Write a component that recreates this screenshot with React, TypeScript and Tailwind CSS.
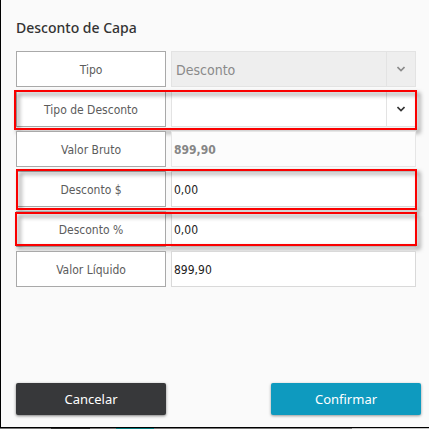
import type { ReactNode } from "react";

const labelClass =
  "flex w-[150px] shrink-0 items-center justify-center border border-[#a9a9a9] bg-white pt-0.5 text-xs text-[#5c5c5c]";
const highlightClass =
  "pointer-events-none absolute border-2 border-[#fa0000] drop-shadow-[3px_3px_2px_rgba(0,0,0,0.5)]";

function Row({ id, label, highlight, children }: { id: string; label: string; highlight?: string; children: ReactNode }) {
  return (
    <div className="relative flex h-9 gap-[5px]">
      <label htmlFor={id} className={labelClass}>
        {label}
      </label>
      {children}
      {highlight && <span className={`${highlightClass} ${highlight}`} />}
    </div>
  );
}

function SelectField({ id, value, disabled }: { id: string; value: string; disabled?: boolean }) {
  return (
    <div className={`relative flex min-w-0 flex-1 border border-[#e3e3e3] ${disabled ? "bg-[#eeeeee] text-[#8a8a8a]" : "bg-white text-[#333333]"}`}>
      <select
        id={id}
        disabled={disabled}
        defaultValue={value}
        className="w-full appearance-none bg-transparent pt-0.5 pl-1 text-sm opacity-100 outline-none"
      >
        <option value={value}>{value}</option>
      </select>
      <span className="pointer-events-none absolute inset-y-0 right-0 flex w-[29px] items-center justify-center border-l border-[#e3e3e3]">
        <svg width="8" height="6" viewBox="0 0 8 6" fill="none" stroke="currentColor" strokeWidth="1.6">
          <path d="M0.5 1L4 4.5 7.5 1" />
        </svg>
      </span>
    </div>
  );
}

function TextField({ id, value, disabled }: { id: string; value: string; disabled?: boolean }) {
  return (
    <input
      id={id}
      type="text"
      defaultValue={value}
      disabled={disabled}
      className={`min-w-0 flex-1 border px-0.5 pt-0.5 text-xs outline-none ${disabled ? "border-[#e6e6e6] bg-[#fcfcfc] font-bold text-[#868686]" : "border-[#d9d9d9] bg-white text-[#222222]"}`}
    />
  );
}

export default function App() {
  return (
    <div className="flex min-h-screen flex-col font-['Noto_Sans','Open_Sans',sans-serif]">
      <main className="flex flex-1 flex-col border-b border-l border-black bg-[#fafafa] pt-4 pr-2 pb-3 pl-[15px]">
        <h1 className="text-sm leading-6 font-medium text-[#333333]">Desconto de Capa</h1>
        <form className="mt-[11px] flex flex-1 flex-col">
          <div className="mr-[5px] flex flex-col gap-1 font-['DejaVu_Sans_Condensed','DejaVu_Sans',sans-serif]">
            <Row id="tipo" label="Tipo">
              <SelectField id="tipo" value="Desconto" disabled />
            </Row>
            <Row id="tipo-desconto" label="Tipo de Desconto" highlight="-top-px -right-px -bottom-[3px] -left-0.5">
              <SelectField id="tipo-desconto" value="" />
            </Row>
            <Row id="bruto" label="Valor Bruto">
              <TextField id="bruto" value="899,90" disabled />
            </Row>
            <Row id="desconto-valor" label="Desconto $" highlight="-top-0.5 -right-px -bottom-[3px] left-0">
              <TextField id="desconto-valor" value="0,00" />
            </Row>
            <Row id="desconto-percentual" label="Desconto %" highlight="top-px -right-px bottom-px -left-px">
              <TextField id="desconto-percentual" value="0,00" />
            </Row>
            <Row id="liquido" label="Valor Líquido">
              <TextField id="liquido" value="899,90" />
            </Row>
          </div>
          <div className="mt-auto flex justify-between pt-4">
            <button type="button" className="h-8 w-[150px] rounded-xs bg-[#37383a] pt-0.5 text-[13px] text-white shadow-[0_1px_3px_rgba(0,0,0,0.5)]">
              Cancelar
            </button>
            <button type="button" className="h-8 w-[150px] rounded-xs bg-[#0e9abf] pt-0.5 text-[13px] text-white shadow-[0_1px_3px_rgba(0,0,0,0.4)]">
              Confirmar
            </button>
          </div>
        </form>
      </main>
      <div className="flex h-px bg-[#c4c4c4]">
        <span className="w-[12%] bg-[#777777]" />
        <span className="w-[9%] bg-[#303030]" />
        <span className="w-[6%] bg-[#777777]" />
        <span className="w-[9%] bg-[#087c80]" />
        <span className="w-[46%] bg-[#777777]" />
      </div>
    </div>
  );
}
